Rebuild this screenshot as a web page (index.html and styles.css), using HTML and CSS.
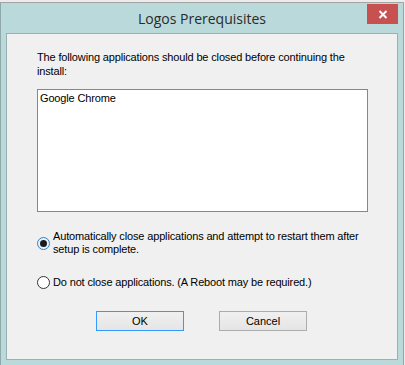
FILE: index.html
```html
<!DOCTYPE html>
<html lang="en">
<head>
  <meta charset="UTF-8">
  <title>Logos Prerequisites</title>
  <link rel="stylesheet" href="styles.css">
</head>
<body>

  <div class="window">
    <!-- title bar -->
    <div class="titlebar">
      <span></span>
      <div class="title">Logos Prerequisites</div>
      <div class="close-btn">
        <svg width="10" height="9" viewBox="0 0 10 9">
          <path d="M1.5 1 L8.5 8 M8.5 1 L1.5 8" stroke="#fff" stroke-width="2" fill="none"/>
        </svg>
      </div>
    </div>

    <div class="panel">
      <p class="intro">The following applications should be closed before continuing the<br>install:</p>

      <div class="app-list">
        <div class="app-item">Google Chrome</div>
      </div>

      <div class="option first">
        <span class="radio checked"></span>
        <span class="option-text">Automatically close applications and attempt to restart them after<br>setup is complete.</span>
      </div>

      <div class="option second">
        <span class="radio"></span>
        <span class="option-text">Do not close applications. (A Reboot may be required.)</span>
      </div>

      <div class="buttons">
        <button class="btn default">OK</button>
        <button class="btn">Cancel</button>
      </div>
    </div>
  </div>

</body>
</html>
```

FILE: styles.css
```css
body {
  margin: 0;
  padding-top: 2px;
  background: #ececec;
  font-family: "Liberation Sans", Arial, sans-serif;
  font-size: 11px;
  letter-spacing: -0.15px;
  color: #000;
  overflow: hidden;
}
.window {
  width: 392px;
  height: 370px;
  border: 1px solid #8fa9aa;
  border-top-color: #a4a4a4;
  background: #b9d9da;
  padding: 0 5px;
}

/* title bar */
.titlebar {
  display: grid;
  grid-template-columns: 31px 1fr 31px;
  height: 30px;
}
.title {
  text-align: center;
  font-family: "Open Sans", "Noto Sans", sans-serif;
  font-size: 14px;
  letter-spacing: 0;
  color: #2a2a2a;
  padding-top: 6px;
}
.close-btn {
  margin-top: 1px;
  width: 31px;
  height: 20px;
  background: #c75050;
  display: flex;
  align-items: center;
  justify-content: center;
}

/* dialog body */
.panel {
  height: 325px;
  border: 1px solid #99b1b2;
  background: #f0f0f0;
  padding: 0 29px 0 30px;
}
.intro {
  margin: 16px 0 0;
  line-height: 14px;
}
.app-list {
  margin-top: 11px;
  height: 119px;
  border: 1px solid #828790;
  background: #fff;
  padding: 1px 2px;
}
.app-item {
  line-height: 14px;
}

.option {
  display: flex;
  align-items: center;
  gap: 3px;
  line-height: 13px;
  white-space: nowrap;
}
.option.first {
  margin-top: 18px;
}
.option.second {
  margin-top: 20px;
}
.radio {
  flex: none;
  width: 11px;
  height: 11px;
  border: 1px solid #333;
  border-radius: 50%;
  background: #fff;
  display: flex;
  align-items: center;
  justify-content: center;
}
.radio.checked {
  border-color: #3c7fb1;
  background: #e6f1fb;
}
.radio.checked::after {
  content: "";
  width: 7px;
  height: 7px;
  border-radius: 50%;
  background: #1b1b1b;
}

.buttons {
  display: flex;
  justify-content: center;
  gap: 35px;
  margin-top: 22px;
  padding-right: 2px;
}
.btn {
  width: 88px;
  height: 20px;
  padding: 0;
  font-family: "Liberation Sans", Arial, sans-serif;
  font-size: 11px;
  color: #000;
  border: 1px solid #acacac;
  background: linear-gradient(#f0f0f0, #e5e5e5);
}
.btn.default {
  border-color: #3399ff;
}
```
